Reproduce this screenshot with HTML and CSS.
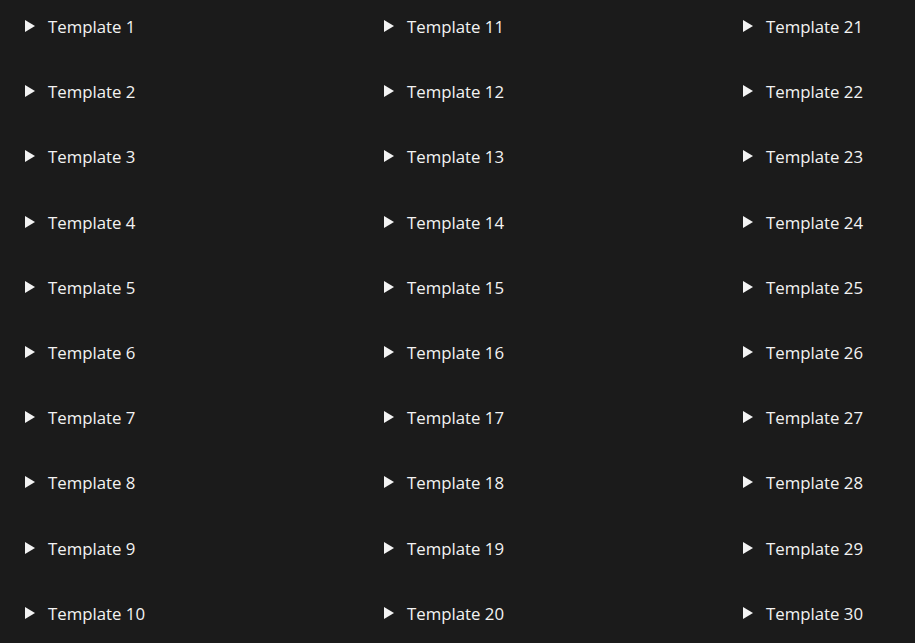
FILE: index.html
```html
<!DOCTYPE html>
<html>
<head>
<meta charset="utf-8">
<link rel="stylesheet" href="styles.css">
</head>
<body>
<div class="grid">
  <div class="item"><span class="tri"></span><span class="label">Template 1</span></div>
  <div class="item"><span class="tri"></span><span class="label">Template 2</span></div>
  <div class="item"><span class="tri"></span><span class="label">Template 3</span></div>
  <div class="item"><span class="tri"></span><span class="label">Template 4</span></div>
  <div class="item"><span class="tri"></span><span class="label">Template 5</span></div>
  <div class="item"><span class="tri"></span><span class="label">Template 6</span></div>
  <div class="item"><span class="tri"></span><span class="label">Template 7</span></div>
  <div class="item"><span class="tri"></span><span class="label">Template 8</span></div>
  <div class="item"><span class="tri"></span><span class="label">Template 9</span></div>
  <div class="item"><span class="tri"></span><span class="label">Template 10</span></div>
  <div class="item"><span class="tri"></span><span class="label">Template 11</span></div>
  <div class="item"><span class="tri"></span><span class="label">Template 12</span></div>
  <div class="item"><span class="tri"></span><span class="label">Template 13</span></div>
  <div class="item"><span class="tri"></span><span class="label">Template 14</span></div>
  <div class="item"><span class="tri"></span><span class="label">Template 15</span></div>
  <div class="item"><span class="tri"></span><span class="label">Template 16</span></div>
  <div class="item"><span class="tri"></span><span class="label">Template 17</span></div>
  <div class="item"><span class="tri"></span><span class="label">Template 18</span></div>
  <div class="item"><span class="tri"></span><span class="label">Template 19</span></div>
  <div class="item"><span class="tri"></span><span class="label">Template 20</span></div>
  <div class="item"><span class="tri"></span><span class="label">Template 21</span></div>
  <div class="item"><span class="tri"></span><span class="label">Template 22</span></div>
  <div class="item"><span class="tri"></span><span class="label">Template 23</span></div>
  <div class="item"><span class="tri"></span><span class="label">Template 24</span></div>
  <div class="item"><span class="tri"></span><span class="label">Template 25</span></div>
  <div class="item"><span class="tri"></span><span class="label">Template 26</span></div>
  <div class="item"><span class="tri"></span><span class="label">Template 27</span></div>
  <div class="item"><span class="tri"></span><span class="label">Template 28</span></div>
  <div class="item"><span class="tri"></span><span class="label">Template 29</span></div>
  <div class="item"><span class="tri"></span><span class="label">Template 30</span></div>
</div>
</body>
</html>
```
FILE: styles.css
```css
html, body {
  margin: 0;
  padding: 0;
  background: #1b1b1b;
  height: 100%;
  overflow: hidden;
}
body {
  font-family: "Open Sans", "Noto Sans", sans-serif;
  color: #f3f3f3;
}
.grid {
  display: grid;
  grid-template-columns: 359px 359px 197px;
  grid-template-rows: repeat(10, 24px);
  grid-auto-flow: column;
  row-gap: 41.2px;
  padding: 14px 0 0 25px;
}
.item {
  display: flex;
  align-items: center;
  height: 24px;
}
.tri {
  width: 0;
  height: 0;
  border-top: 6px solid transparent;
  border-bottom: 6px solid transparent;
  border-left: 10px solid #f3f3f3;
  margin-right: 13px;
}
.label {
  font-size: 16.8px;
  line-height: 24px;
  padding-top: 2px;
}
```
